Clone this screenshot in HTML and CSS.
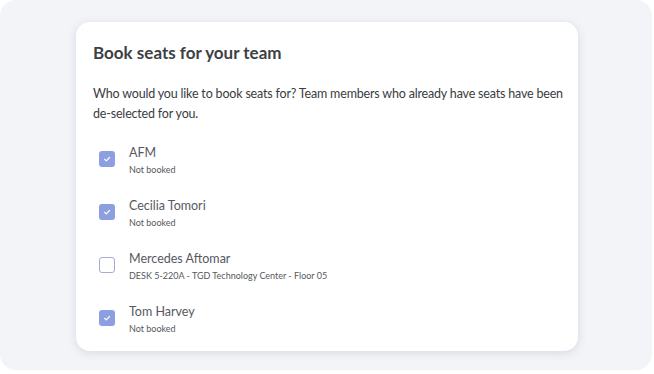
FILE: index.html
```html
<!DOCTYPE html>
<html lang="en">
<head>
    <meta charset="UTF-8">
    <meta name="viewport" content="width=device-width, initial-scale=1.0">
    <title>Book seats</title>
    <link rel="stylesheet" href="styles.css">
</head>
<body>
    <div class="frame">
        <div class="card">
            <h1>Book seats for your team</h1>
            <p class="intro">Who would you like to book seats for? Team members who already have seats have been de-selected for you.</p>
            <ul class="people">
                <li class="person">
                    <span class="box checked">
                        <svg viewBox="0 0 16 16" width="16" height="16"><path d="M5.6 8.3l1.7 1.6 3.2-3.4" fill="none" stroke="#fff" stroke-width="1.2" stroke-linecap="round" stroke-linejoin="round"/></svg>
                    </span>
                    <div>
                        <div class="name">AFM</div>
                        <div class="status">Not booked</div>
                    </div>
                </li>
                <li class="person">
                    <span class="box checked">
                        <svg viewBox="0 0 16 16" width="16" height="16"><path d="M5.6 8.3l1.7 1.6 3.2-3.4" fill="none" stroke="#fff" stroke-width="1.2" stroke-linecap="round" stroke-linejoin="round"/></svg>
                    </span>
                    <div>
                        <div class="name">Cecilia Tomori</div>
                        <div class="status">Not booked</div>
                    </div>
                </li>
                <li class="person">
                    <span class="box"></span>
                    <div>
                        <div class="name">Mercedes Aftomar</div>
                        <div class="status">DESK 5-220A - TGD Technology Center - Floor 05</div>
                    </div>
                </li>
                <li class="person">
                    <span class="box checked">
                        <svg viewBox="0 0 16 16" width="16" height="16"><path d="M5.6 8.3l1.7 1.6 3.2-3.4" fill="none" stroke="#fff" stroke-width="1.2" stroke-linecap="round" stroke-linejoin="round"/></svg>
                    </span>
                    <div>
                        <div class="name">Tom Harvey</div>
                        <div class="status">Not booked</div>
                    </div>
                </li>
            </ul>
        </div>
    </div>
</body>
</html>
```

FILE: styles.css
```css
body {
    margin: 0;
    background: #ffffff;
    font-family: Lato, "Noto Sans", sans-serif;
}
.frame {
    width: 652px;
    height: 370px;
    box-sizing: border-box;
    padding: 22px 0 0 76px;
    background: #f3f4f8;
    border-radius: 16px;
}
.card {
    width: 502px;
    height: 329px;
    box-sizing: border-box;
    padding: 20px 8px 0 17px;
    background: #ffffff;
    border-radius: 14px;
    box-shadow: 0 2px 10px rgba(40, 44, 70, 0.13);
}
h1 {
    margin: 0;
    font-size: 17px;
    line-height: 22px;
    font-weight: 700;
    color: #3d3f44;
}
.intro {
    margin: 20px 0 0 0;
    font-size: 12.5px;
    letter-spacing: -0.18px;
    line-height: 20px;
    color: #3a3c41;
}
.people {
    list-style: none;
    margin: 20px 0 0 0;
    padding: 0;
}
.person {
    display: flex;
    align-items: flex-start;
    height: 53px;
}
.box {
    width: 16px;
    height: 16px;
    box-sizing: border-box;
    margin: 7px 14px 0 6px;
    border: 1.5px solid #a6acd6;
    border-radius: 3px;
    display: flex;
}
.box.checked {
    border: none;
    background: #8c9fe0;
}
.name {
    font-size: 12.5px;
    line-height: 18px;
    color: #56595f;
}
.status {
    margin-top: 2px;
    font-size: 9px;
    line-height: 12px;
    color: #55585e;
}
```
